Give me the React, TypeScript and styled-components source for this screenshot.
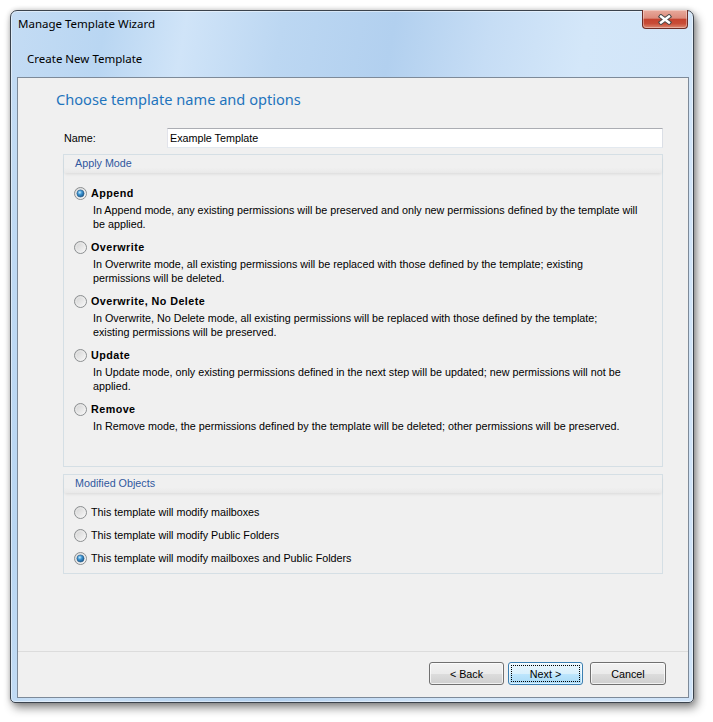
import * as React from 'react'
import styled, { createGlobalStyle } from 'styled-components';

const GlobalStyle = createGlobalStyle`
    html, body {
        margin: 0;
        padding: 0;
        background: #ffffff;
    }
    body {
        font-family: "Liberation Sans", Arial, sans-serif;
        font-size: 10.75px;
        color: #000000;
    }
`;

const Desktop = styled.div`
    width: 713px;
    height: 722px;
    padding: 10px 0 0 10px;
    box-sizing: border-box;
`;

const Window = styled.div`
    width: 684px;
    height: 693px;
    box-sizing: border-box;
    display: flex;
    flex-direction: column;
    padding: 0 4px 4px 6px;
    border: 1px solid #3b434d;
    border-radius: 7px 7px 5px 5px;
    background: linear-gradient(100deg, #c4dcf4 0%, #b9d6f2 12%, #d0e4f8 22%, #bcd7f2 34%, #b2d0ef 48%, #c6ddf5 60%, #d4e7f9 72%, #cfe3f8 100%);
    box-shadow: inset 0 0 0 1px rgba(255, 255, 255, 0.45), 3px 5px 10px rgba(0, 0, 0, 0.45), 0 0 5px rgba(0, 0, 0, 0.2);
`;

const TitleBar = styled.div`
    height: 26px;
    display: flex;
    align-items: flex-start;
    justify-content: space-between;
`;

const TitleText = styled.div`
    font-family: "Noto Sans", "Open Sans", sans-serif;
    font-size: 11.5px;
    line-height: 26px;
    padding-left: 1px;
    color: #000000;
`;

const CloseButton = styled.div`
    width: 46px;
    height: 19px;
    margin-top: -1px;
    margin-right: 1px;
    box-sizing: border-box;
    border: 1px solid #6d2c25;
    border-top: none;
    border-radius: 0 0 4px 4px;
    background: linear-gradient(to bottom, #e8aa9c 0%, #dc8b7c 45%, #c5432f 52%, #c84c37 75%, #dc8770 100%);
    box-shadow: inset 0 0 0 1px rgba(255, 255, 255, 0.35);
    display: flex;
    align-items: center;
    justify-content: center;
`;

const SubTitle = styled.div`
    height: 40px;
    display: flex;
    align-items: center;
    padding: 2px 0 0 10px;
    box-sizing: border-box;
    font-family: "Noto Sans", "Open Sans", sans-serif;
    font-size: 11.5px;
`;

const Client = styled.div`
    flex: 1;
    display: flex;
    flex-direction: column;
    background: #f0f0f0;
    border: 1px solid #7d8a99;
`;

const Content = styled.div`
    flex: 1;
    padding: 11px 25px 0 38px;
`;

const Heading = styled.div`
    font-family: "Noto Sans", "Open Sans", sans-serif;
    font-size: 14.6px;
    line-height: 20px;
    color: #1f74bd;
    margin-bottom: 19px;
`;

const Form = styled.div`
    margin-left: 7px;
`;

const NameRow = styled.div`
    display: flex;
    align-items: center;
    height: 20px;
`;

const Label = styled.div`
    width: 103px;
    padding-left: 1px;
`;

const TextBox = styled.div`
    flex: 1;
    height: 20px;
    box-sizing: border-box;
    background: #ffffff;
    border: 1px solid #dbdfe6;
    border-top-color: #abadb3;
    border-left-color: #e2e3ea;
    border-bottom-color: #e3e9ef;
    padding-left: 2px;
    line-height: 18px;
`;

const GroupBox = styled.div<{ $height: number; $gap: number }>`
    height: ${p => p.$height}px;
    margin-top: ${p => p.$gap}px;
    box-sizing: border-box;
    border: 1px solid #d5dfe5;
`;

const GroupHeader = styled.div`
    height: 18px;
    line-height: 17px;
    padding-left: 11px;
    color: #30589e;
    background: linear-gradient(to bottom, #f0f0f0 0%, #f0f0f0 70%, #e9e9e9 100%);
    box-shadow: 0 2px 3px -1px rgba(0, 0, 0, 0.1);
`;

const GroupBody = styled.div<{ $top: number }>`
    padding: ${p => p.$top}px 0 0 10px;
    display: flex;
    flex-direction: column;
`;

const ModeItem = styled.div`
    margin-bottom: 8px;
`;

const RadioRow = styled.div<{ $bold?: boolean }>`
    display: flex;
    align-items: center;
    height: 16px;
    gap: 4px;
    font-weight: ${p => (p.$bold ? 'bold' : 'normal')};
    letter-spacing: ${p => (p.$bold ? '0.45px' : '0')};
`;

const ObjectRow = styled(RadioRow)`
    margin-bottom: 7px;
`;

const Description = styled.div`
    margin-top: 2px;
    padding-left: 19px;
    line-height: 14px;
    white-space: nowrap;
`;

const Footer = styled.div`
    height: 35px;
    border-top: 1px solid #dcdcdc;
    display: flex;
    justify-content: flex-end;
    align-items: flex-start;
    padding: 10px 22px 0 0;
`;

const Button = styled.div<{ $default?: boolean; $gap?: number; $width?: number }>`
    width: ${p => p.$width || 75}px;
    height: 23px;
    margin-left: ${p => p.$gap || 0}px;
    box-sizing: border-box;
    border: 1px solid ${p => (p.$default ? '#3c7fb1' : '#707070')};
    border-radius: 3px;
    background: ${p => (p.$default
        ? 'linear-gradient(to bottom, #eaf6fd 0%, #d9f0fc 50%, #bee6fd 51%, #a7d9f5 100%)'
        : 'linear-gradient(to bottom, #f2f2f2 0%, #ebebeb 50%, #dddddd 51%, #cfcfcf 100%)')};
    box-shadow: inset 0 0 0 1px ${p => (p.$default ? 'rgba(255,255,255,0.6)' : 'rgba(255,255,255,0.7)')};
    display: flex;
    align-items: center;
    justify-content: center;
    position: relative;
`;

const FocusRect = styled.div`
    position: absolute;
    inset: 2px;
    border: 1px dotted #000000;
`;

function Radio(props: { checked?: boolean }) {
    const id = React.useId().replace(/:/g, '');
    return (
        <svg width="13" height="13" viewBox="0 0 13 13" style={{ flex: 'none' }}>
            <defs>
                <linearGradient id={'ring' + id} x1="0" y1="0" x2="1" y2="1">
                    <stop offset="0" stopColor="#cfcfcf" />
                    <stop offset="1" stopColor="#fbfbfb" />
                </linearGradient>
                <radialGradient id={'dot' + id} cx="0.4" cy="0.35" r="0.65">
                    <stop offset="0" stopColor="#c6ecfd" />
                    <stop offset="0.45" stopColor="#3d95d3" />
                    <stop offset="1" stopColor="#1b5a8e" />
                </radialGradient>
            </defs>
            <circle cx="6.5" cy="6.5" r="6" fill={'url(#ring' + id + ')'} stroke="#8c8f91" strokeWidth="1" />
            <circle cx="6.5" cy="6.5" r="4.6" fill="none" stroke="#f4f4f4" strokeWidth="0.8" opacity="0.6" />
            {props.checked && <circle cx="6.5" cy="6.5" r="3.6" fill={'url(#dot' + id + ')'} stroke="#2a5e8a" strokeWidth="0.6" />}
        </svg>
    );
}

function CloseGlyph() {
    return (
        <svg width="14" height="11" viewBox="0 0 14 11">
            <path d="M3 2.5 L11 8.5 M11 2.5 L3 8.5" stroke="#4a4a4a" strokeWidth="4.4" strokeLinecap="square" />
            <path d="M3 2.5 L11 8.5 M11 2.5 L3 8.5" stroke="#ffffff" strokeWidth="2.4" strokeLinecap="square" />
        </svg>
    );
}

const modes = [
    {
        name: 'Append',
        checked: true,
        lines: [
            'In Append mode, any existing permissions will be preserved and only new permissions defined by the template will',
            'be applied.',
        ],
    },
    {
        name: 'Overwrite',
        lines: [
            'In Overwrite mode, all existing permissions will be replaced with those defined by the template; existing',
            'permissions will be deleted.',
        ],
    },
    {
        name: 'Overwrite, No Delete',
        lines: [
            'In Overwrite, No Delete mode, all existing permissions will be replaced with those defined by the template;',
            'existing permissions will be preserved.',
        ],
    },
    {
        name: 'Update',
        lines: [
            'In Update mode, only existing permissions defined in the next step will be updated; new permissions will not be',
            'applied.',
        ],
    },
    {
        name: 'Remove',
        lines: [
            'In Remove mode, the permissions defined by the template will be deleted; other permissions will be preserved.',
        ],
    },
];

const objects = [
    { label: 'This template will modify mailboxes' },
    { label: 'This template will modify Public Folders' },
    { label: 'This template will modify mailboxes and Public Folders', checked: true },
];

export default function App() {
    return (
        <Desktop>
            <GlobalStyle />
            <Window>
                <TitleBar>
                    <TitleText>Manage Template Wizard</TitleText>
                    <CloseButton><CloseGlyph /></CloseButton>
                </TitleBar>
                <SubTitle>Create New Template</SubTitle>
                <Client>
                    <Content>
                        <Heading>Choose template name and options</Heading>
                        <Form>
                            <NameRow>
                                <Label>Name:</Label>
                                <TextBox>Example Template</TextBox>
                            </NameRow>
                            <GroupBox $height={313} $gap={6}>
                                <GroupHeader>Apply Mode</GroupHeader>
                                <GroupBody $top={12}>
                                    {modes.map((m, i) => (
                                        <ModeItem key={i}>
                                            <RadioRow $bold>
                                                <Radio checked={m.checked} />
                                                <span>{m.name}</span>
                                            </RadioRow>
                                            <Description>
                                                {m.lines.map((l, j) => <div key={j}>{l}</div>)}
                                            </Description>
                                        </ModeItem>
                                    ))}
                                </GroupBody>
                            </GroupBox>
                            <GroupBox $height={100} $gap={7}>
                                <GroupHeader>Modified Objects</GroupHeader>
                                <GroupBody $top={11}>
                                    {objects.map((o, i) => (
                                        <ObjectRow key={i}>
                                            <Radio checked={o.checked} />
                                            <span>{o.label}</span>
                                        </ObjectRow>
                                    ))}
                                </GroupBody>
                            </GroupBox>
                        </Form>
                    </Content>
                    <Footer>
                        <Button>&lt; Back</Button>
                        <Button $default $gap={4}><FocusRect />Next &gt;</Button>
                        <Button $gap={7} $width={76}>Cancel</Button>
                    </Footer>
                </Client>
            </Window>
        </Desktop>
    );
}
